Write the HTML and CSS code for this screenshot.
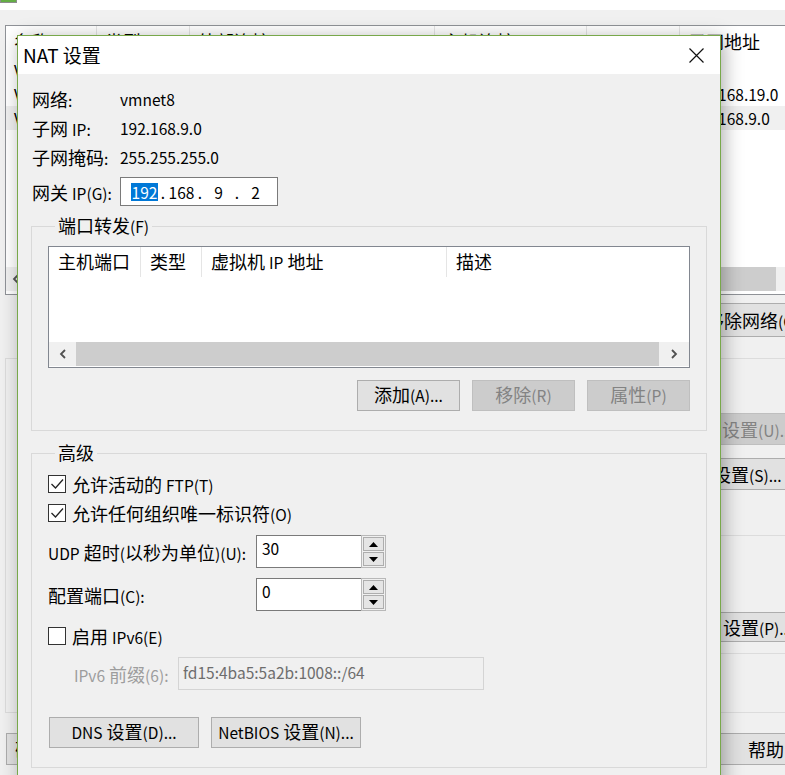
FILE: index.html
```html
<!DOCTYPE html>
<html lang="zh-CN">
<head>
<meta charset="utf-8">
<title>NAT 设置</title>
<link rel="stylesheet" href="styles.css">
</head>
<body>
<div class="screen">
  <div class="bg">
    <div class="bg-top"><span class="bg-icon"></span></div>
    <div class="bg-band"></div>
    <div class="bg-list">
      <div class="bg-head">
        <span>名称</span><span>类型</span><span>外部连接</span><span>主机连接</span><span class="l">DHCP</span><span>子网地址</span>
      </div>
      <div class="bg-row">
        <span class="l">VMnet0</span><span>桥接模式</span><span>自动桥接</span><span>-</span><span>-</span><span></span>
      </div>
      <div class="bg-row">
        <span class="l">VMnet1</span><span>仅主机...</span><span>-</span><span>已连接</span><span>已启用</span><span class="l">192.168.19.0</span>
      </div>
      <div class="bg-row bg-row-hover">
        <span class="l">VMnet8</span><span><span class="l">NAT</span> 模式</span><span><span class="l">NAT</span> 模式</span><span>已连接</span><span>已启用</span><span class="l">192.168.9.0</span>
      </div>
      <div class="bg-fill"></div>
      <div class="bg-scroll">
        <span class="bg-arrow"><svg width="10" height="10" viewBox="0 0 10 10"><polyline points="7,1 3,5 7,9" fill="none" stroke="#555" stroke-width="1.8"/></svg></span>
        <span class="bg-thumb"></span>
        <span class="bg-arrow bg-arrow-r"></span>
      </div>
    </div>
    <div class="bg-btnrow">
      <span class="bg-btn bg-btn-remove">移除网络<span class="l">(O)</span></span>
    </div>
    <div class="bg-box">
      <div class="bg-side">
        <div class="bg-btn bg-btn-off bg-btn-u">设置<span class="l">(U)...</span></div>
        <div class="bg-btn bg-btn-s">设置<span class="l">(S)...</span></div>
        <div class="bg-sub">
          <div class="bg-btn bg-btn-p">设置<span class="l">(P)...</span></div>
        </div>
      </div>
    </div>
    <div class="bg-bottom">
      <span class="bg-btn bg-btn-ok">确定</span>
      <span class="bg-btn bg-btn-help">帮助</span>
    </div>
  </div>

  <div class="dialog">
    <div class="titlebar">
      <span class="title">NAT 设置</span>
      <span class="close"><svg width="15" height="15" viewBox="0 0 15 15"><path d="M0.5 0.5 L14.5 14.5 M14.5 0.5 L0.5 14.5" stroke="#111" stroke-width="1.2" fill="none"/></svg></span>
    </div>
    <div class="content">
      <div class="info-row"><span class="info-label">网络<span class="l">:</span></span><span class="info-value">vmnet8</span></div>
      <div class="info-row"><span class="info-label">子网 <span class="l">IP:</span></span><span class="info-value">192.168.9.0</span></div>
      <div class="info-row"><span class="info-label">子网掩码<span class="l">:</span></span><span class="info-value">255.255.255.0</span></div>
      <div class="info-row info-gw">
        <span class="info-label">网关 <span class="l">IP(G):</span></span>
        <span class="ip">
          <span class="ip-part"><span class="ip-sel">192</span></span><span class="ip-dot">.</span><span class="ip-part">168</span><span class="ip-dot">.</span><span class="ip-part">9</span><span class="ip-dot">.</span><span class="ip-part">2</span>
        </span>
      </div>

      <div class="group">
        <div class="group-title">端口转发<span class="l">(F)</span></div>
        <div class="lv">
          <div class="lv-head">
            <span>主机端口</span><span>类型</span><span>虚拟机 <span class="l">IP</span> 地址</span><span class="lv-last">描述</span>
          </div>
          <div class="lv-body"></div>
          <div class="lv-scroll">
            <span class="lv-arrow"><svg width="10" height="10" viewBox="0 0 10 10"><polyline points="7,1 3,5 7,9" fill="none" stroke="#505050" stroke-width="1.8"/></svg></span>
            <span class="lv-thumb"></span>
            <span class="lv-arrow lv-arrow-r"><svg width="10" height="10" viewBox="0 0 10 10"><polyline points="3,1 7,5 3,9" fill="none" stroke="#505050" stroke-width="1.8"/></svg></span>
          </div>
        </div>
        <div class="btn-row">
          <span class="btn btn-sm">添加<span class="l">(A)...</span></span>
          <span class="btn btn-sm btn-off">移除<span class="l">(R)</span></span>
          <span class="btn btn-sm btn-off">属性<span class="l">(P)</span></span>
        </div>
      </div>

      <div class="group group-adv">
        <div class="group-title">高级</div>
        <div class="check-row check-first">
          <span class="box"><svg width="16" height="16" viewBox="0 0 16 16"><polyline points="2.5,8 6.5,12 14,3.5" fill="none" stroke="#222" stroke-width="1.3"/></svg></span>
          <span>允许活动的 <span class="l">FTP(T)</span></span>
        </div>
        <div class="check-row">
          <span class="box"><svg width="16" height="16" viewBox="0 0 16 16"><polyline points="2.5,8 6.5,12 14,3.5" fill="none" stroke="#222" stroke-width="1.3"/></svg></span>
          <span>允许任何组织唯一标识符<span class="l">(O)</span></span>
        </div>
        <div class="field-row field-udp">
          <span class="field-label"><span class="l">UDP</span> 超时<span class="l">(</span>以秒为单位<span class="l">)(U):</span></span>
          <span class="spin">
            <span class="spin-field">30</span>
            <span class="spin-btns">
              <span class="spin-btn"><svg width="9" height="5" viewBox="0 0 9 5"><polygon points="0,5 4.5,0 9,5" fill="#000"/></svg></span>
              <span class="spin-btn"><svg width="9" height="5" viewBox="0 0 9 5"><polygon points="0,0 9,0 4.5,5" fill="#000"/></svg></span>
            </span>
          </span>
        </div>
        <div class="field-row field-port">
          <span class="field-label">配置端口<span class="l">(C):</span></span>
          <span class="spin">
            <span class="spin-field">0</span>
            <span class="spin-btns">
              <span class="spin-btn"><svg width="9" height="5" viewBox="0 0 9 5"><polygon points="0,5 4.5,0 9,5" fill="#000"/></svg></span>
              <span class="spin-btn"><svg width="9" height="5" viewBox="0 0 9 5"><polygon points="0,0 9,0 4.5,5" fill="#000"/></svg></span>
            </span>
          </span>
        </div>
        <div class="check-row check-ipv6">
          <span class="box"></span>
          <span>启用 <span class="l">IPv6(E)</span></span>
        </div>
        <div class="prefix-row">
          <span class="prefix-label"><span class="l">IPv6</span> 前缀<span class="l">(6):</span></span>
          <span class="prefix-input">fd15:4ba5:5a2b:1008::/64</span>
        </div>
        <div class="bottom-btns">
          <span class="btn btn-lg"><span class="l">DNS</span> 设置<span class="l">(D)...</span></span>
          <span class="btn btn-lg"><span class="l">NetBIOS</span> 设置<span class="l">(N)...</span></span>
        </div>
      </div>
    </div>
  </div>
</div>
</body>
</html>
```

FILE: styles.css
```css
* { box-sizing: border-box; }
html, body { margin: 0; padding: 0; }
body {
  width: 785px;
  height: 775px;
  overflow: hidden;
  font-family: "Noto Sans CJK SC", "Noto Sans CJK JP", sans-serif;
  font-size: 18px;
  color: #000;
  background: #f0f0f0;
}
.screen { position: relative; width: 785px; height: 775px; overflow: hidden; }
.l { font-size: 15.5px; line-height: 1; }

/* background window */
.bg { width: 800px; height: 775px; background: #f0f0f0; }
.bg-top { height: 10px; background: #fff; }
.bg-icon { display: block; width: 17px; height: 3px; background: #64ad45; border: 1px solid #8c8c8c; border-top: 0; }
.bg-band { height: 15px; }
.bg-list {
  margin-left: 5px;
  height: 270px;
  background: #fff;
  border: 1px solid #8f9297;
  border-right: 0;
  display: flex;
  flex-direction: column;
}
.bg-head, .bg-row { display: grid; grid-template-columns: 91px 93px 245px 152px 93px 1fr; }
.bg-head { height: 32px; }
.bg-head span {
  padding: 3px 0 0 8px;
  line-height: 24px;
  border-right: 1px solid #e5e5e5;
  white-space: nowrap;
  overflow: hidden;
}
.bg-row { height: 24px; line-height: 24px; }
.bg-row > span { padding-left: 8px; white-space: nowrap; overflow: hidden; }
.bg-row > span.l { line-height: 24px; }
.bg-row-hover { background: #f0f0f0; }
.bg-fill { flex: 1; }
.bg-scroll { height: 24px; display: flex; background: #f0f0f0; margin-bottom: 3px; }
.bg-arrow { width: 20px; display: flex; align-items: center; justify-content: center; }
.bg-arrow-r { width: 24px; }
.bg-thumb { flex: 1; background: #cdcdcd; }

.bg-btn {
  display: block;
  background: #e1e1e1;
  border: 1px solid #adadad;
  height: 32px;
  line-height: 30px;
  white-space: nowrap;
  overflow: hidden;
}
.bg-btn-off { background: #cccccc; border-color: #bfbfbf; color: #838383; }
.bg-btnrow { height: 34px; margin-top: 8px; display: flex; justify-content: flex-end; }
.bg-btn-remove { width: 110px; height: 34px; line-height: 32px; padding-left: 15px; }
.bg-box {
  margin: 21px 0 0 5px;
  height: 355px;
  border: 1px solid #dcdcdc;
  border-right: 0;
  display: flex;
  justify-content: flex-end;
}
.bg-side { width: 110px; padding-top: 54px; }
.bg-btn-u { padding-left: 31px; }
.bg-btn-s { margin-top: 13px; padding-left: 22px; }
.bg-sub { margin-top: 45px; border-top: 1px solid #dcdcdc; border-bottom: 1px solid #dcdcdc; padding: 76px 0 11px; }
.bg-btn-p { height: 30px; line-height: 28px; padding-left: 32px; }
.bg-bottom { margin-top: 20px; height: 32px; display: flex; justify-content: space-between; }
.bg-btn-ok { margin-left: 6px; width: 100px; padding-left: 8px; }
.bg-btn-help { width: 110px; padding-left: 57px; }

/* dialog */
.dialog {
  position: absolute;
  left: 17px;
  top: 35px;
  width: 704px;
  height: 760px;
  border: 1px solid #78a84a;
  background: #f0f0f0;
  box-shadow: 3px 3px 18px rgba(0, 0, 0, 0.32);
}
.titlebar {
  height: 38px;
  background: #fff;
  display: flex;
  align-items: center;
  justify-content: space-between;
  padding-left: 5px;
}
.title { font-size: 19px; line-height: 36px; }
.close { width: 48px; height: 38px; display: flex; align-items: center; justify-content: center; }

.content { padding: 10px 13px 0; }
.info-row { display: flex; align-items: center; height: 29px; padding-left: 1px; white-space: nowrap; }
.info-label { width: 88px; }
.info-value { font-size: 15.5px; }
.info-gw { margin-top: 6px; }
.ip {
  width: 158px;
  height: 29px;
  border: 1px solid #7a7a7a;
  background: #fff;
  display: flex;
  align-items: center;
  padding-left: 9px;
  font-size: 15.5px;
}
.ip-part { width: 29px; text-align: center; line-height: 18px; }
.ip-dot { width: 8px; text-align: center; line-height: 18px; }
.ip-sel { background: #0078d7; color: #fff; display: inline-block; padding: 0 1px; }

.group { margin-top: 20px; border: 1px solid #d9d9d9; padding: 0 16px 19px; }
.group-adv { margin-top: 22px; }
.group-title {
  width: max-content;
  height: 20px;
  margin: -12px 0 0 7px;
  padding: 0 3px;
  line-height: 20px;
  background: #f0f0f0;
}

.lv {
  margin-top: 11px;
  height: 122px;
  border: 1px solid #828790;
  background: #fff;
  display: flex;
  flex-direction: column;
  padding-bottom: 1px;
}
.lv-head { height: 32px; display: grid; grid-template-columns: 92px 61px 245px 1fr; }
.lv-head > span {
  height: 30px;
  line-height: 28px;
  padding-left: 9px;
  border-right: 1px solid #e5e5e5;
  white-space: nowrap;
}
.lv-head .lv-last { border-right: 0; }
.lv-body { flex: 1; }
.lv-scroll { height: 24px; display: flex; background: #f0f0f0; }
.lv-arrow { width: 27px; display: flex; align-items: center; justify-content: center; }
.lv-arrow-r { width: 30px; }
.lv-thumb { flex: 1; background: #cdcdcd; }

.btn-row { margin-top: 12px; display: flex; justify-content: flex-end; gap: 12px; }
.btn {
  display: block;
  height: 31px;
  border: 1px solid #adadad;
  background: #e1e1e1;
  line-height: 27px;
  text-align: center;
  white-space: nowrap;
}
.btn-sm { width: 103px; }
.btn-lg { width: 150px; }
.btn-off { background: #cccccc; border-color: #bfbfbf; color: #838383; }

.check-row { display: flex; align-items: center; height: 29px; white-space: nowrap; }
.check-first { margin-top: 7px; }
.check-ipv6 { margin-top: 10px; }
.box {
  width: 18px;
  height: 18px;
  border: 1px solid #333;
  background: #fff;
  margin-right: 6px;
  display: flex;
  align-items: center;
  justify-content: center;
}

.field-row { display: flex; align-items: center; white-space: nowrap; }
.field-udp { margin-top: 8px; }
.field-port { margin-top: 10px; }
.field-label { width: 208px; }
.spin { display: flex; height: 33px; }
.spin-field {
  width: 105px;
  border: 1px solid #7a7a7a;
  border-right: 0;
  background: #fff;
  padding-left: 5px;
  line-height: 25px;
  font-size: 15.5px;
}
.spin-btns {
  width: 25px;
  border: 1px solid #b8b8b8;
  background: #f0f0f0;
  padding: 1px;
  display: flex;
  flex-direction: column;
  gap: 1px;
}
.spin-btn {
  flex: 1;
  background: #e5e5e5;
  border: 1px solid #adadad;
  display: flex;
  align-items: center;
  justify-content: center;
}

.prefix-row { margin-top: 7px; padding-left: 26px; display: flex; align-items: center; color: #9d9d9d; white-space: nowrap; }
.prefix-label { width: 104px; }
.prefix-input {
  width: 306px;
  height: 33px;
  border: 1px solid #d4d4d4;
  color: #6d6d6d;
  padding: 0 0 0 4px;
  line-height: 28px;
  font-size: 15.5px;
}
.bottom-btns { margin-top: 27px; display: flex; gap: 12px; padding-left: 1px; }
```
